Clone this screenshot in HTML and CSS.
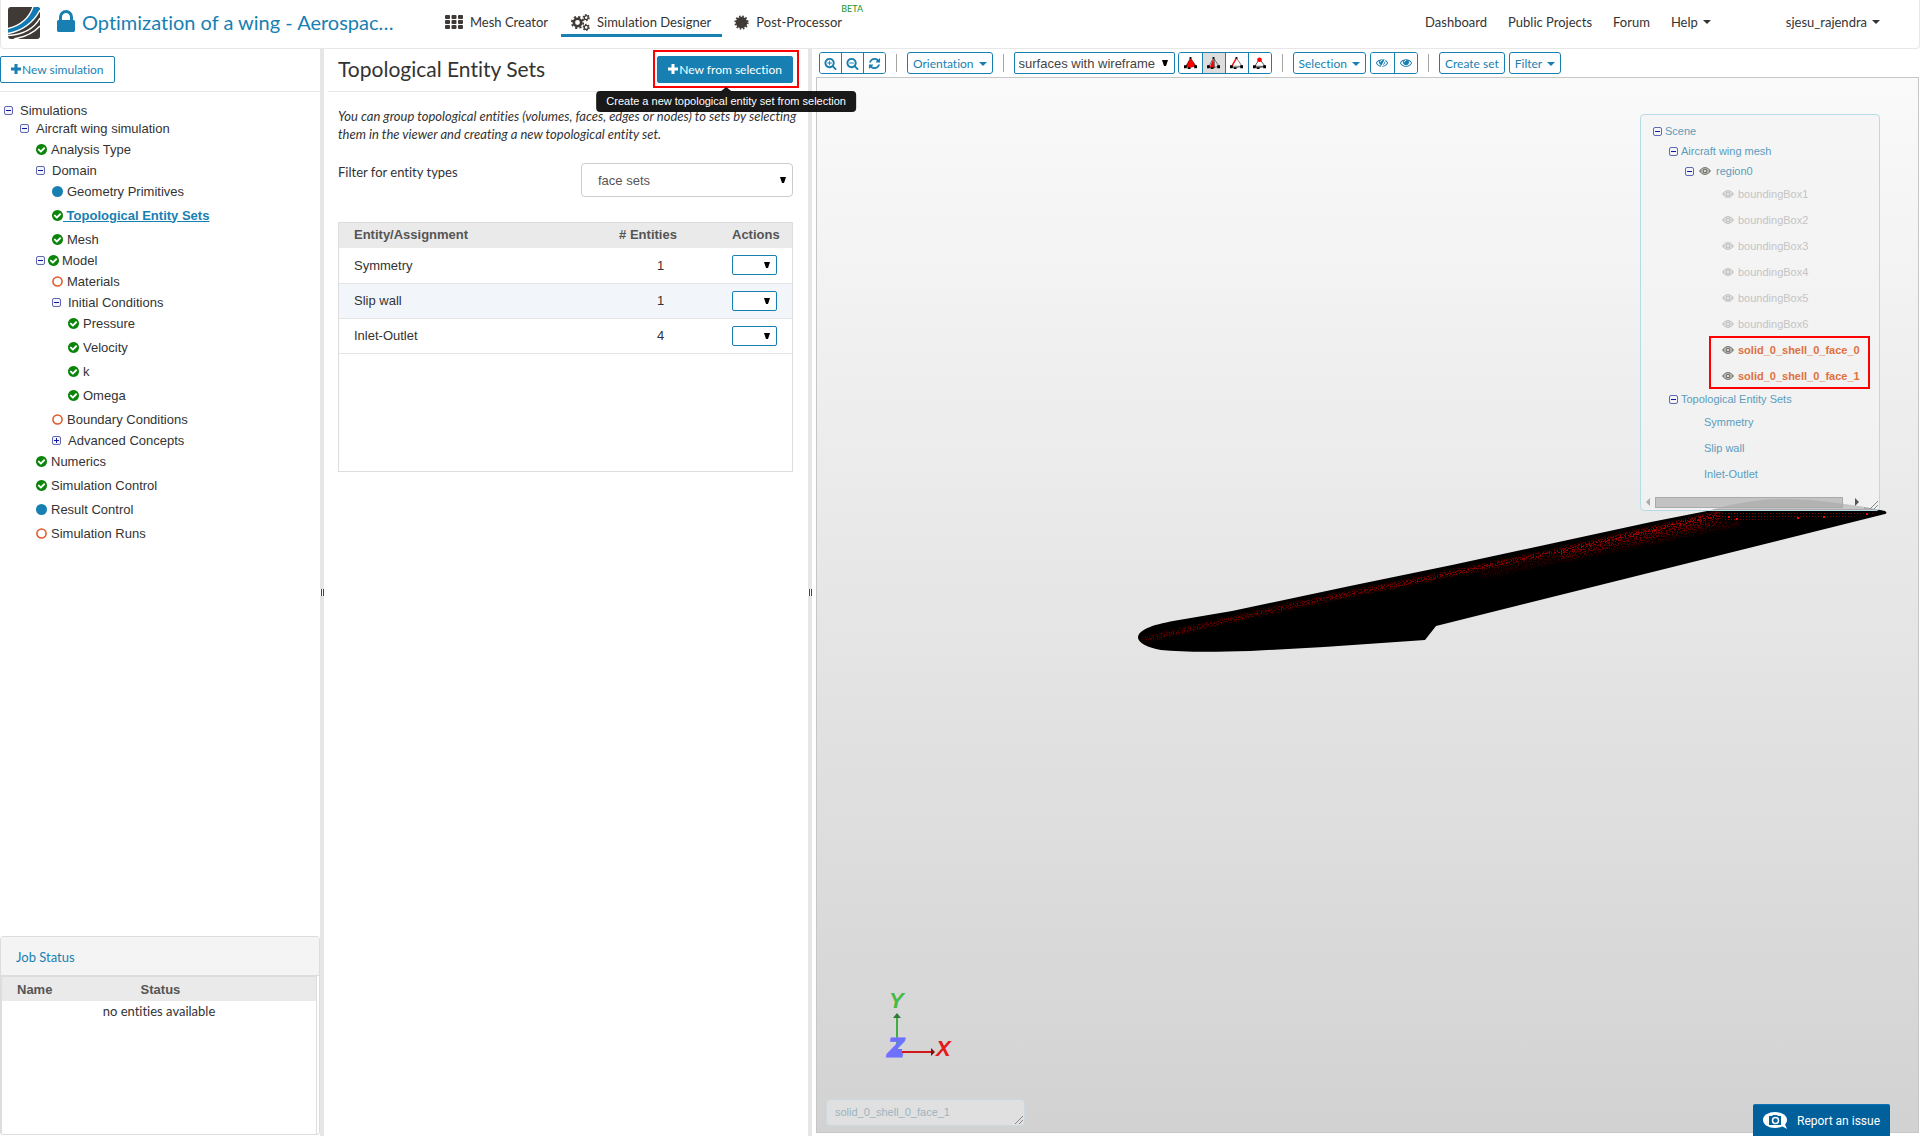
FILE: index.html
```html
<!DOCTYPE html>
<html lang="en">
<head>
    <meta charset="UTF-8">
    <meta name="viewport" content="width=device-width, initial-scale=1.0">
    <title>Optimization of a wing - Simulation Designer</title>
    <link rel="stylesheet" href="styles.css">
</head>
<body>
    <!-- Icon sprite -->
    <svg class="sprite" aria-hidden="true">
        <symbol id="check" viewBox="128 128 1536 1536"><path d="M1412 734q0-28-18-46l-91-90q-19-19-45-19t-45 19l-408 407-226-226q-19-19-45-19t-45 19l-91 90q-18 18-18 46 0 27 18 45l362 362q19 19 45 19 27 0 46-19l543-543q18-18 18-45zm252 162q0 209-103 385.5t-279.5 279.5-385.5 103-385.5-103-279.5-279.5-103-385.5 103-385.5 279.5-279.5 385.5-103 385.5 103 279.5 279.5 103 385.5z"/></symbol>
        <symbol id="dot" viewBox="0 0 12 12"><circle cx="6" cy="6" r="6"/></symbol>
        <symbol id="ring" viewBox="0 0 12 12"><circle cx="6" cy="6" r="5" fill="none" stroke="currentColor" stroke-width="1.7"/></symbol>
        <symbol id="plus" viewBox="0 0 10 10"><path d="M3.5 0h3v3.5H10v3H6.500V10h-3V6.500H0v-3h3.500z"/></symbol>
        <symbol id="lock" viewBox="320 128 1152 1408"><path d="M640 768h512v-192q0-106-75-181t-181-75-181 75-75 181v192zm832 96v576q0 40-28 68t-68 28h-960q-40 0-68-28t-28-68v-576q0-40 28-68t68-28h32v-192q0-184 132-316t316-132 316 132 132 316v192h32q40 0 68 28t28 68z"/></symbol>
        <symbol id="zoom-in" viewBox="0 0 1792 1792"><path d="M1088 800v64q0 13-9.500 22.500t-22.500 9.500h-224v224q0 13-9.500 22.500t-22.500 9.500h-64q-13 0-22.500-9.500t-9.500-22.500v-224h-224q-13 0-22.500-9.500t-9.500-22.500v-64q0-13 9.500-22.500t22.500-9.500h224v-224q0-13 9.500-22.500t22.500-9.500h64q13 0 22.500 9.500t9.500 22.500v224h224q13 0 22.500 9.500t9.500 22.500zm128 32q0-185-131.500-316.500t-316.500-131.500-316.500 131.500-131.500 316.500 131.500 316.500 316.500 131.500 316.500-131.500 131.500-316.500zm512 832q0 53-37.500 90.500t-90.500 37.500q-54 0-90-38l-343-342q-179 124-399 124-143 0-273.500-55.500t-225-150-150-225-55.500-273.500 55.500-273.500 150-225 225-150 273.500-55.500 273.500 55.500 225 150 150 225 55.500 273.500q0 220-124 399l343 343q37 37 37 90z"/></symbol>
        <symbol id="zoom-out" viewBox="0 0 1792 1792"><path d="M1088 800v64q0 13-9.500 22.500t-22.500 9.500h-576q-13 0-22.500-9.500t-9.500-22.500v-64q0-13 9.500-22.500t22.500-9.500h576q13 0 22.500 9.500t9.500 22.500zm128 32q0-185-131.500-316.500t-316.500-131.500-316.500 131.500-131.500 316.500 131.500 316.500 316.500 131.500 316.500-131.500 131.500-316.500zm512 832q0 53-37.500 90.500t-90.500 37.500q-54 0-90-38l-343-342q-179 124-399 124-143 0-273.500-55.500t-225-150-150-225-55.500-273.500 55.500-273.500 150-225 225-150 273.500-55.500 273.500 55.500 225 150 150 225 55.500 273.500q0 220-124 399l343 343q37 37 37 90z"/></symbol>
        <symbol id="refresh" viewBox="0 0 1792 1792"><path d="M1639 1056q0 5-1 7-64 268-268 434.500t-478 166.500q-146 0-282.500-55t-243.500-157l-129 129q-19 19-45 19t-45-19-19-45v-448q0-26 19-45t45-19h448q26 0 45 19t19 45-19 45l-137 137q71 66 161 102t187 36q134 0 250-65t186-179q11-17 53-117 8-23 30-23h192q13 0 22.500 9.500t9.500 22.500zm25-800v448q0 26-19 45t-45 19h-448q-26 0-45-19t-19-45 19-45l138-138q-148-137-349-137-134 0-250 65t-186 179q-11 17-53 117-8 23-30 23h-199q-13 0-22.500-9.500t-9.500-22.500v-7q65-268 270-434.500t480-166.500q146 0 284 55.500t245 156.500l130-129q19-19 45-19t45 19 19 45z"/></symbol>
        <symbol id="eye" viewBox="0 384 1792 1152"><path d="M1664 960q-152-236-381-353 61 104 61 225 0 185-131.500 316.500t-316.500 131.500-316.500-131.500-131.500-316.500q0-121 61-225-229 117-381 353 133 205 333.500 326.500t434.500 121.500 434.500-121.500 333.500-326.500zm-720-384q0-20-14-34t-34-14q-125 0-214.500 89.500t-89.500 214.500q0 20 14 34t34 14 34-14 14-34q0-86 61-147t147-61q20 0 34-14t14-34zm848 384q0 34-20 69-140 230-376.500 368.500t-499.500 138.500-499.500-139-376.500-368q-20-35-20-69t20-69q140-229 376.500-368t499.500-139 499.500 139 376.500 368q20 35 20 69z"/></symbol>
        <symbol id="eye-off" viewBox="0 384 1792 1152"><use href="#eye" x="0" y="384" width="1792" height="1152"/><path d="M1380 380L760 1560" stroke="#fff" stroke-width="200"/><path d="M1220 400L620 1520" stroke="currentColor" stroke-width="130"/></symbol>
        <symbol id="eye-solid" viewBox="0 0 12 8"><path fill-rule="evenodd" d="M0 4Q3 0 6 0t6 4Q9 8 6 8T0 4zm6-2.800a2.800 2.800 0 1 0 0 5.600a2.800 2.800 0 1 0 0-5.600z"/><circle cx="6" cy="4" r="2.500"/><circle cx="6" cy="4" r="1" fill="#f3f3f3"/><path d="M3.200 1.700a3.500 3.500 0 0 0 0 4.600M8.800 1.700a3.500 3.500 0 0 1 0 4.600" fill="none" stroke="#f3f3f3" stroke-width=".5"/></symbol>
        <symbol id="grid" viewBox="0 0 18 14"><path d="M1 0h3q1 0 1 1v2q0 1-1 1H1Q0 4 0 3V1q0-1 1-1zM7.500 0h3q1 0 1 1v2q0 1-1 1h-3q-1 0-1-1V1q0-1 1-1zM14 0h3q1 0 1 1v2q0 1-1 1h-3q-1 0-1-1V1q0-1 1-1zM1 5h3q1 0 1 1v2q0 1-1 1H1Q0 9 0 8V6q0-1 1-1zM7.500 5h3q1 0 1 1v2q0 1-1 1h-3q-1 0-1-1V6q0-1 1-1zM14 5h3q1 0 1 1v2q0 1-1 1h-3q-1 0-1-1V6q0-1 1-1zM1 10h3q1 0 1 1v2q0 1-1 1H1q-1 0-1-1v-2q0-1 1-1zM7.500 10h3q1 0 1 1v2q0 1-1 1h-3q-1 0-1-1v-2q0-1 1-1zM14 10h3q1 0 1 1v2q0 1-1 1h-3q-1 0-1-1v-2q0-1 1-1z"/></symbol>
        <symbol id="cogs" viewBox="0 0 19 17">
            <g fill="none" stroke="currentColor">
                <circle cx="6.500" cy="8.500" r="3.700" stroke-width="2.600"/><circle cx="6.500" cy="8.500" r="5.700" stroke-width="1.800" stroke-dasharray="2.240 2.240"/>
                <circle cx="15.200" cy="3.600" r="2" stroke-width="1.400"/><circle cx="15.200" cy="3.600" r="3" stroke-width="1.200" stroke-dasharray="1.570 1.570"/>
                <circle cx="15.200" cy="13.400" r="2" stroke-width="1.400"/><circle cx="15.200" cy="13.400" r="3" stroke-width="1.200" stroke-dasharray="1.570 1.570"/>
            </g>
        </symbol>
        <symbol id="burst" viewBox="0 0 16 16"><circle cx="8" cy="8" r="6.200"/><circle cx="8" cy="8" r="6.700" fill="none" stroke="currentColor" stroke-width="1.800" stroke-dasharray="1.750 1.758"/></symbol>
        <symbol id="caret" viewBox="0 0 8 4"><path d="M0 0h8L4 4z"/></symbol>
        <symbol id="tet-solid" viewBox="0 0 14 14"><path d="M7 1L2 10l3 2 8-2z" fill="#f00"/><path d="M7 1L2 10M7 1l6 9" fill="none" stroke="#311" stroke-width=".7"/><path d="M6 0h2v2H6zM0 9h3v3H0zM4 11h3v2H4zM11 9h3v3h-3z"/></symbol>
        <symbol id="tet-face" viewBox="0 0 14 14"><path d="M7 1l5 9-7 2z" fill="#ddd"/><path d="M7 1L3 11l5 1z" fill="#f00"/><path d="M7 1L2 10l3 2 8-2zM8 2v9" fill="none" stroke="#222" stroke-width=".6"/><path d="M6 0h2v2H6zM0 9h3v3H0zM4 11h3v2H4zM11 9h3v3h-3z"/></symbol>
        <symbol id="tet-edge" viewBox="0 0 14 14"><path d="M7 1l6 9-8 2-3-2 11 0" fill="none" stroke="#555" stroke-width=".8"/><path d="M7 1L2 10" stroke="#f00" stroke-width="1.500"/><path d="M6 0h2v2H6zM0 9h3v3H0zM4 11h3v2H4zM11 9h3v3h-3z"/></symbol>
        <symbol id="tet-node" viewBox="0 0 14 14"><path d="M7 2L2 10l3 2 8-2zM2 10l11 0" fill="none" stroke="#222" stroke-width=".8"/><path d="M0 9h3v3H0zM4 11h3v2H4zM11 9h3v3h-3z"/><circle cx="7" cy="3" r="2.500" fill="#f00"/></symbol>
    </svg>

    <header class="topbar">
        <a class="logo" href="#" aria-label="Home">
            <svg viewBox="0 0 32 32" width="32" height="32">
                <clipPath id="logoClip"><rect width="32" height="32" rx="3"/></clipPath>
                <g clip-path="url(#logoClip)">
                    <rect width="32" height="32" fill="#403a36"/>
                    <path d="M0 22Q20 17 25 0h7v2Q24 22 0 27z" fill="#0f7ab3"/>
                    <g fill="none" stroke="#fff" stroke-width="1.400">
                        <path d="M0 21.500Q19 17 25 0"/>
                        <path d="M0 26.500Q22 22 32 3"/>
                        <path d="M0 28.500Q23 27 32 11"/>
                        <path d="M6 32Q23 29 32 19"/>
                    </g>
                </g>
            </svg>
        </a>
        <svg class="lock" width="18" height="22"><use href="#lock"/></svg>
        <h1 class="project">Optimization of a wing - Aerospac…</h1>
        <nav class="modes">
            <a href="#"><svg width="18" height="14"><use href="#grid"/></svg>Mesh Creator</a>
            <a class="active" href="#"><svg width="19" height="17"><use href="#cogs"/></svg>Simulation Designer</a>
            <a href="#"><svg width="15" height="15"><use href="#burst"/></svg>Post-Processor<span class="beta">BETA</span></a>
        </nav>
        <nav class="links">
            <a href="#">Dashboard</a>
            <a href="#">Public Projects</a>
            <a href="#">Forum</a>
            <a href="#">Help <svg width="8" height="4"><use href="#caret"/></svg></a>
            <a class="user" href="#">sjesu_rajendra <svg width="8" height="4"><use href="#caret"/></svg></a>
        </nav>
    </header>

    <main class="workspace">
        <!-- Simulation tree -->
        <aside class="sidebar">
            <div class="panel-head">
                <button class="btn" type="button"><svg width="10" height="10"><use href="#plus"/></svg>New simulation</button>
            </div>
            <ul class="tree">
                <li><div class="folder"><button class="toggle" aria-label="Collapse"></button>Simulations</div>
                    <ul>
                        <li><div class="folder"><button class="toggle" aria-label="Collapse"></button>Aircraft wing simulation</div>
                            <ul>
                                <li class="leaf"><svg class="done"><use href="#check"/></svg>Analysis Type</li>
                                <li><div class="folder"><button class="toggle" aria-label="Collapse"></button>Domain</div>
                                    <ul>
                                        <li class="leaf"><svg class="info"><use href="#dot"/></svg>Geometry Primitives</li>
                                        <li class="leaf selected"><svg class="done"><use href="#check"/></svg><a href="#">&nbsp;Topological Entity Sets</a></li>
                                        <li class="leaf"><svg class="done"><use href="#check"/></svg>Mesh</li>
                                    </ul>
                                </li>
                                <li><div class="folder with-status"><button class="toggle" aria-label="Collapse"></button><svg class="done"><use href="#check"/></svg>Model</div>
                                    <ul>
                                        <li class="leaf"><svg class="todo"><use href="#ring"/></svg>Materials</li>
                                        <li><div class="folder"><button class="toggle" aria-label="Collapse"></button>Initial Conditions</div>
                                            <ul>
                                                <li class="leaf"><svg class="done"><use href="#check"/></svg>Pressure</li>
                                                <li class="leaf"><svg class="done"><use href="#check"/></svg>Velocity</li>
                                                <li class="leaf"><svg class="done"><use href="#check"/></svg>k</li>
                                                <li class="leaf"><svg class="done"><use href="#check"/></svg>Omega</li>
                                            </ul>
                                        </li>
                                        <li class="leaf"><svg class="todo"><use href="#ring"/></svg>Boundary Conditions</li>
                                        <li><div class="folder"><button class="toggle closed" aria-label="Expand"></button>Advanced Concepts</div></li>
                                    </ul>
                                </li>
                                <li class="leaf"><svg class="done"><use href="#check"/></svg>Numerics</li>
                                <li class="leaf"><svg class="done"><use href="#check"/></svg>Simulation Control</li>
                                <li class="leaf"><svg class="info"><use href="#dot"/></svg>Result Control</li>
                                <li class="leaf"><svg class="todo"><use href="#ring"/></svg>Simulation Runs</li>
                            </ul>
                        </li>
                    </ul>
                </li>
            </ul>
            <section class="jobs">
                <h2>Job Status</h2>
                <div class="jobs-body">
                    <table>
                        <thead><tr><th>Name</th><th>Status</th></tr></thead>
                        <tbody><tr><td colspan="2">no entities available</td></tr></tbody>
                    </table>
                </div>
            </section>
        </aside>

        <div class="splitter"></div>

        <!-- Entity sets -->
        <section class="details">
            <div class="panel-head">
                <h2>Topological Entity Sets</h2>
                <div class="highlight">
                    <button class="btn primary" type="button" aria-describedby="newTip"><svg width="10" height="10"><use href="#plus"/></svg>New from selection</button>
                    <div class="tooltip" id="newTip" role="tooltip">Create a new topological entity set from selection</div>
                </div>
            </div>
            <div class="details-body">
                <p class="hint">You can group topological entities (volumes, faces, edges or nodes) to sets by selecting them in the viewer and creating a new topological entity set.</p>
                <div class="filter">
                    <label for="entityType">Filter for entity types</label>
                    <select id="entityType"><option>face sets</option></select>
                </div>
                <div class="entity-box">
                    <table class="entities">
                        <thead>
                            <tr><th>Entity/Assignment</th><th class="num"># Entities</th><th class="act">Actions</th></tr>
                        </thead>
                        <tbody>
                            <tr><td>Symmetry</td><td class="num">1</td><td class="act"><select aria-label="Actions for Symmetry"><option></option></select></td></tr>
                            <tr><td>Slip wall</td><td class="num">1</td><td class="act"><select aria-label="Actions for Slip wall"><option></option></select></td></tr>
                            <tr><td>Inlet-Outlet</td><td class="num">4</td><td class="act"><select aria-label="Actions for Inlet-Outlet"><option></option></select></td></tr>
                        </tbody>
                    </table>
                </div>
            </div>
        </section>

        <div class="splitter"></div>

        <!-- 3D viewer -->
        <section class="viewer">
            <div class="toolbar">
                <div class="group">
                    <button type="button" aria-label="Zoom in"><svg width="13" height="13"><use href="#zoom-in"/></svg></button>
                    <button type="button" aria-label="Zoom out"><svg width="13" height="13"><use href="#zoom-out"/></svg></button>
                    <button type="button" aria-label="Reset view"><svg width="13" height="13"><use href="#refresh"/></svg></button>
                </div>
                <span class="sep"></span>
                <button class="tool" type="button">Orientation<svg width="8" height="4"><use href="#caret"/></svg></button>
                <span class="sep"></span>
                <div class="render">
                    <select aria-label="Render mode"><option>surfaces with wireframe</option></select>
                    <div class="group">
                        <button type="button" aria-label="Pick volumes"><svg width="13" height="13"><use href="#tet-solid"/></svg></button>
                        <button class="pressed" type="button" aria-label="Pick faces"><svg width="13" height="13"><use href="#tet-face"/></svg></button>
                        <button type="button" aria-label="Pick edges"><svg width="13" height="13"><use href="#tet-edge"/></svg></button>
                        <button type="button" aria-label="Pick nodes"><svg width="13" height="13"><use href="#tet-node"/></svg></button>
                    </div>
                </div>
                <span class="sep"></span>
                <div class="pick">
                    <button class="tool" type="button">Selection<svg width="8" height="4"><use href="#caret"/></svg></button>
                    <div class="group">
                        <button type="button" aria-label="Hide selection"><svg width="12" height="8"><use href="#eye-off"/></svg></button>
                        <button type="button" aria-label="Show selection"><svg width="12" height="8"><use href="#eye"/></svg></button>
                    </div>
                </div>
                <span class="sep"></span>
                <div class="pick">
                    <button class="tool" type="button">Create set</button>
                    <button class="tool" type="button">Filter<svg width="8" height="4"><use href="#caret"/></svg></button>
                </div>
            </div>

            <div class="canvas">
                <svg class="model" viewBox="817 78 1101 1054" preserveAspectRatio="xMidYMid meet">
                    <defs>
                        <path id="wing" d="M1138 638C1138 629 1155 624 1179 620L1232 611L1350 586L1452 565L1554 543L1651 522L1707 511C1735 503 1760 499 1783 499C1810 499 1845 503 1875 509L1885 511Q1888 513 1885 514L1436 626L1425 640L1324 647L1250 651Q1190 653 1161 650Q1140 646 1138 638z"/>
                        <clipPath id="wingClip"><use href="#wing"/></clipPath>
                        <linearGradient id="streak" gradientUnits="userSpaceOnUse" x1="1140" y1="640" x2="1720" y2="515">
                            <stop offset="0" stop-color="#d00000" stop-opacity=".5"/>
                            <stop offset=".5" stop-color="#d00000" stop-opacity=".75"/>
                            <stop offset="1" stop-color="#d00000" stop-opacity=".95"/>
                        </linearGradient>
                        <filter id="speckle" filterUnits="userSpaceOnUse" x="1130" y="490" width="770" height="170">
                            <feGaussianBlur in="SourceGraphic" stdDeviation="1.800" result="soft"/>
                            <feTurbulence type="fractalNoise" baseFrequency="0.750" numOctaves="2" seed="4"/>
                            <feColorMatrix values="0 0 0 0 1  0 0 0 0 1  0 0 0 0 1  6 0 0 0 -2.700" result="grain"/>
                            <feComposite in="soft" in2="grain" operator="in"/>
                        </filter>
                        <pattern id="mesh" width="3" height="3" patternUnits="userSpaceOnUse"><rect width="1" height="1" fill="#c00000"/></pattern>
                    </defs>
                    <use href="#wing"/>
                    <g clip-path="url(#wingClip)">
                        <g filter="url(#speckle)" fill="none" stroke="url(#streak)">
                            <path d="M1142 640L1300 604L1420 580L1560 551L1720 514" stroke-width="5"/>
                            <path d="M1560 556L1720 520" stroke-width="7" opacity=".5"/>
                            <path d="M1480 575L1740 522" stroke-width="8" opacity=".25"/>
                        </g>
                        <path d="M1715 513L1732 504L1783 499L1885 512L1850 517L1725 521z" fill="url(#mesh)" opacity=".7"/>
                        <path d="M1728 516h2v2h-2zM1736 518h2v2h-2zM1797 517h2v2h-2zM1823 516h2v2h-2zM1866 513h2v2h-2z" fill="#f00"/>
                    </g>
                    <!-- Axes -->
                    <path d="M897 1050V1017" stroke="#3fae3f" stroke-width="2"/>
                    <path d="M893 1018l4-5 4 5z" fill="#2f7a3a"/>
                    <path d="M900 1052H932" stroke="#d01818" stroke-width="2"/>
                    <path d="M931 1048l4 4-4 4z" fill="#801010"/>
                    <g class="axis">
                        <text x="889" y="1008" fill="#45bb45">Y</text>
                        <text x="936" y="1056" fill="#e61919">X</text>
                        <text class="depth" x="887" y="1057" fill="#7070ff" stroke="#7070ff">Z</text>
                        <path d="M889 1057l8-8h5v8z" fill="#7070ff"/>
                    </g>
                </svg>

                <div class="scene">
                    <ul>
                        <li><div class="row"><button class="toggle" aria-label="Collapse"></button>Scene</div>
                            <ul>
                                <li><div class="row"><button class="toggle" aria-label="Collapse"></button>Aircraft wing mesh</div>
                                    <ul>
                                        <li><div class="row region"><button class="toggle" aria-label="Collapse"></button><svg width="12" height="8"><use href="#eye-solid"/></svg>region0</div>
                                            <ul class="faces">
                                                <li class="off"><svg width="12" height="8"><use href="#eye-solid"/></svg>boundingBox1</li>
                                                <li class="off"><svg width="12" height="8"><use href="#eye-solid"/></svg>boundingBox2</li>
                                                <li class="off"><svg width="12" height="8"><use href="#eye-solid"/></svg>boundingBox3</li>
                                                <li class="off"><svg width="12" height="8"><use href="#eye-solid"/></svg>boundingBox4</li>
                                                <li class="off"><svg width="12" height="8"><use href="#eye-solid"/></svg>boundingBox5</li>
                                                <li class="off"><svg width="12" height="8"><use href="#eye-solid"/></svg>boundingBox6</li>
                                                <li class="picked"><svg width="12" height="8"><use href="#eye-solid"/></svg>solid_0_shell_0_face_0</li>
                                                <li class="picked"><svg width="12" height="8"><use href="#eye-solid"/></svg>solid_0_shell_0_face_1</li>
                                            </ul>
                                        </li>
                                    </ul>
                                </li>
                                <li><div class="row"><button class="toggle" aria-label="Collapse"></button>Topological Entity Sets</div>
                                    <ul class="sets">
                                        <li>Symmetry</li>
                                        <li>Slip wall</li>
                                        <li>Inlet-Outlet</li>
                                    </ul>
                                </li>
                            </ul>
                        </li>
                    </ul>
                    <div class="mark"></div>
                    <div class="hscroll"><span class="arrow prev"></span><span class="thumb"></span><span class="arrow next"></span></div>
                    <svg class="grip" width="8" height="8"><path d="M0 8L8 0M4 8L8 4"/></svg>
                </div>

                <div class="picked-name">solid_0_shell_0_face_1<svg class="grip" width="8" height="8"><path d="M0 8L8 0M4 8L8 4"/></svg></div>
            </div>
        </section>
    </main>

    <button class="report" type="button">
        <svg width="24" height="17" viewBox="0 0 24 17"><ellipse cx="12" cy="8" rx="12" ry="8" fill="#fff"/><path d="M17 13l7 4-3-7z" fill="#fff"/><path d="M6 4h3l1-1h4l1 1h3v9H6z" fill="#00609c"/><circle cx="12.500" cy="8.500" r="3" fill="none" stroke="#fff" stroke-width="1.500"/></svg>
        Report an issue
    </button>
</body>
</html>
```
FILE: styles.css
```css
* {
    box-sizing: border-box;
}
body {
    margin: 0;
    height: 100vh;
    display: flex;
    flex-direction: column;
    font-family: Lato, sans-serif;
    font-size: 13px;
    font-variant-ligatures: none;
    color: #333;
    background: #fff;
    overflow: hidden;
}
ul {
    list-style: none;
    margin: 0;
    padding: 0;
}
h1, h2, p {
    margin: 0;
    font-weight: normal;
}
a {
    color: inherit;
    text-decoration: none;
}
button, select {
    font: inherit;
    cursor: pointer;
}
svg {
    fill: currentColor;
    flex: none;
}
.sprite {
    position: absolute;
    width: 0;
    height: 0;
}

/* Top bar */
.topbar {
    display: flex;
    align-items: center;
    flex: none;
    height: 49px;
    padding: 0 39px 4px 7px;
    border: 1px solid #e7e7e7;
    border-top: 0;
    border-radius: 0 0 4px 4px;
}
.logo {
    display: flex;
    margin-top: 2px;
}
.lock {
    margin: 0 7px 2px 17px;
    color: #187fb2;
}
.project {
    width: 363px;
    font-size: 20px;
    color: #187fb2;
    white-space: nowrap;
}
.modes {
    display: flex;
    align-items: center;
}
.modes a {
    display: flex;
    align-items: center;
    gap: 7px;
    height: 27px;
    margin-top: 3px;
    padding-right: 13px;
    border-bottom: 3px solid transparent;
    position: relative;
}
.modes svg {
    color: #403a36;
}
.modes .active {
    padding: 0 11px 0 10px;
    margin-right: 12px;
    border-color: #187fb2;
}
.beta {
    position: absolute;
    right: -8px;
    top: -7px;
    font-size: 9px;
    line-height: 12px;
    color: #1a962a;
}
.links {
    display: flex;
    margin-left: auto;
    gap: 21px;
}
.links a {
    display: flex;
    align-items: center;
    gap: 5px;
}
.links .user {
    margin-left: 54px;
}

/* Layout */
.workspace {
    display: flex;
    flex: 1;
    min-height: 0;
}
.sidebar {
    display: flex;
    flex-direction: column;
    flex: 0 0 320px;
}
.details {
    flex: 0 0 484px;
    padding-left: 4px;
}
.viewer {
    display: flex;
    flex-direction: column;
    flex: 1;
    min-width: 0;
    padding: 0 1px 3px 4px;
}
.splitter {
    display: flex;
    align-items: center;
    flex: 0 0 4px;
    background: #e6e6e6;
}
.splitter::before {
    content: '';
    width: 4px;
    height: 7px;
    background: linear-gradient(to right, #fff 1px, #444 1px, #444 2px, #fff 2px, #fff 3px, #444 3px);
}
.panel-head {
    display: flex;
    align-items: center;
    justify-content: space-between;
    flex: none;
    height: 43px;
    padding-bottom: 1px;
    border-bottom: 1px solid #e7e7e7;
}
.panel-head h2 {
    margin-bottom: 1px;
    font-size: 21px;
}
.btn {
    display: flex;
    align-items: center;
    gap: 1px;
    height: 27px;
    padding: 0 10px;
    font-size: 12px;
    color: #187fb2;
    background: #fff;
    border: 1px solid #187fb2;
    border-radius: 2px;
    margin-bottom: 1px;
}
.btn.primary {
    margin: 0;
    color: #fff;
    background: #187fb2;
}

/* Trees */
.tree {
    flex: 1;
    padding: 9px 4px;
    font: 13px "Liberation Sans", Arial, sans-serif;
}
.tree ul {
    padding-left: 16px;
}
.folder, .leaf {
    display: flex;
    align-items: center;
}
.folder {
    height: 18px;
    gap: 7px;
}
.folder.with-status {
    gap: 3px;
}
.leaf {
    height: 24px;
    gap: 4px;
}
.tree svg {
    width: 11px;
    height: 11px;
}
.done {
    color: #0a850a;
}
.info {
    color: #187fb2;
}
.todo {
    color: #e2592a;
}
.leaf.selected {
    gap: 0;
    font-weight: bold;
    color: #187fb2;
}
.leaf.selected a {
    text-decoration: underline;
}
.toggle {
    flex: none;
    width: 9px;
    height: 9px;
    padding: 0;
    border: 1px solid #5f69b0;
    border-radius: 2px;
    background: linear-gradient(#1515a0, #1515a0) center / 5px 1px no-repeat, #f2f4fa;
}
.toggle.closed {
    background: linear-gradient(#1515a0, #1515a0) center / 5px 1px no-repeat, linear-gradient(#1515a0, #1515a0) center / 1px 5px no-repeat, #f2f4fa;
}

/* Job status */
.jobs {
    flex: none;
    display: flex;
    flex-direction: column;
    height: 199px;
    border: 1px solid #ddd;
    border-radius: 3px;
    margin-bottom: 1px;
}
.jobs h2 {
    height: 39px;
    padding-left: 15px;
    font-size: 13px;
    line-height: 40px;
    color: #187fb2;
    background: #f4f4f4;
    border-bottom: 1px solid #ddd;
}
.jobs-body {
    flex: 1;
    margin-right: 2px;
    border: 1px solid #ddd;
    border-width: 1px 1px 0;
}
.jobs table {
    width: 100%;
    border-collapse: collapse;
}
.jobs th {
    height: 24px;
    padding: 0 0 0 15px;
    font: bold 13px "Liberation Sans", Arial, sans-serif;
    text-align: left;
    color: #555;
    background: #eaeaea;
}
.jobs th:last-child {
    width: 60%;
    padding-left: 13px;
}
.jobs td {
    padding: 0;
    line-height: 20px;
    text-align: center;
}

/* Entity sets */
.details .panel-head {
    padding: 0 9px 3px 10px;
}
.highlight {
    position: relative;
    padding: 4px 4px 3px 2px;
    border: 2px solid #f00;
}
.tooltip {
    position: absolute;
    z-index: 5;
    top: 39px;
    left: 50%;
    transform: translateX(-50%);
    padding: 0 10px;
    font: 11px/21px "Liberation Sans", Arial, sans-serif;
    white-space: nowrap;
    color: #fff;
    background: rgba(0, 0, 0, 0.9);
    border-radius: 4px;
}
.tooltip::before {
    content: '';
    position: absolute;
    top: -4px;
    left: 50%;
    margin-left: -5px;
    border: 5px solid transparent;
    border-top: 0;
    border-bottom: 4px solid rgba(0, 0, 0, 0.9);
}
.details-body {
    padding: 15px 15px 0 10px;
}
.hint {
    margin-right: -14px;
    line-height: 18px;
    font-style: italic;
}
.filter {
    display: flex;
    justify-content: space-between;
    margin: 20px 0 25px;
}
.filter label {
    line-height: 18px;
}
.filter select {
    width: 212px;
    height: 34px;
    padding: 0 16px;
    font: 13px "Liberation Sans", Arial, sans-serif;
    color: #555;
    border: 1px solid #ccc;
    border-radius: 4px;
}
select {
    appearance: none;
    background: #fff url("data:image/svg+xml,%3Csvg xmlns='http://www.w3.org/2000/svg' width='6' height='6'%3E%3Cpath d='M0 0h6L4 6H2z'/%3E%3C/svg%3E") right 6px center no-repeat;
}
.entity-box {
    height: 250px;
    border: 1px solid #ddd;
}
.entities {
    width: 100%;
    border-collapse: collapse;
    font: 13px "Liberation Sans", Arial, sans-serif;
}
.entities th {
    height: 25px;
    padding: 0 0 2px 15px;
    text-align: left;
    color: #555;
    background: #eaeaea;
}
.entities td {
    height: 35px;
    padding: 0 0 0 15px;
    border-bottom: 1px solid #e4e4e4;
}
.entities tbody tr:nth-child(even) {
    background: #f2f6fb;
}
.entities .num {
    width: 114px;
    padding: 0 29px 0 0;
    text-align: center;
}
.entities th.num {
    padding: 0 54px 2px 0;
    white-space: nowrap;
}
.entities .act {
    width: 60px;
    padding-left: 0;
}
.entities select {
    display: block;
    width: 45px;
    height: 20px;
    border: 1px solid #187fb2;
    border-radius: 2px;
}

/* Viewer */
.toolbar {
    display: flex;
    align-items: center;
    flex: none;
    height: 28px;
    gap: 10px;
    padding: 0 0 0 3px;
    color: #187fb2;
}
.group {
    display: flex;
    border: 1px solid #187fb2;
    border-radius: 3px;
    overflow: hidden;
}
.group button {
    display: flex;
    align-items: center;
    justify-content: center;
    width: 22px;
    height: 20px;
    padding: 0;
    color: #187fb2;
    background: #fff;
    border: 0;
    border-left: 1px solid #187fb2;
}
.group button:first-child {
    width: 21px;
    border-left: 0;
}
.render .group button {
    width: 23px;
    color: #000;
}
.group .pressed {
    background: #ddd;
}
.pick .group button {
    width: 23px;
    color: #187fb2;
}
.sep {
    width: 1px;
    height: 18px;
    background: #a9a5a0;
}
.tool {
    display: flex;
    align-items: center;
    gap: 5px;
    height: 22px;
    padding: 0 5px;
    font-size: 12px;
    color: #187fb2;
    background: #fff;
    border: 1px solid #187fb2;
    border-radius: 3px;
}
.tool svg {
    margin-top: 2px;
}
.render, .pick {
    display: flex;
    align-items: center;
    gap: 3px;
}
.pick {
    gap: 4px;
}
.render select {
    width: 161px;
    height: 22px;
    padding: 0 4px;
    font: 13px "Liberation Sans", Arial, sans-serif;
    color: #444;
    border: 1px solid #187fb2;
    border-radius: 2px;
}
.canvas {
    flex: 1;
    position: relative;
    min-height: 0;
    border: 1px solid #c6c6c6;
    background: linear-gradient(#fafafa, #d2d2d2);
}
.model {
    display: block;
    width: 100%;
    height: 100%;
    fill: #000;
}
.axis {
    font: italic bold 22px "Liberation Sans", Arial, sans-serif;
}
.axis .depth {
    font-size: 28px;
    stroke-width: 1px;
}

/* Scene tree */
.scene {
    position: absolute;
    top: 36px;
    right: 38px;
    width: 240px;
    height: 397px;
    padding: 6px 12px;
    font: 11px "Liberation Sans", Arial, sans-serif;
    color: #5b9cbd;
    background: rgba(244, 244, 244, 0.7);
    border: 1px solid #b5dce5;
    border-radius: 4px;
}
.scene ul ul {
    padding-left: 16px;
}
.scene .row {
    display: flex;
    align-items: center;
    gap: 3px;
    height: 20px;
}
.scene .region {
    gap: 5px;
}
.scene svg {
    color: #7c7c74;
}
.scene .faces {
    padding-left: 37px;
}
.scene .faces li, .scene .sets li {
    display: flex;
    align-items: center;
    gap: 4px;
    height: 26px;
}
.scene .sets {
    padding-left: 35px;
}
.scene .off, .scene .off svg {
    color: #c4c4c4;
}
.scene .picked {
    font-weight: bold;
    color: #e0703f;
}
.mark {
    position: absolute;
    top: 221px;
    right: 9px;
    width: 161px;
    height: 53px;
    border: 2px solid #f00;
}
.hscroll {
    position: absolute;
    left: 1px;
    right: 15px;
    bottom: 1px;
    display: flex;
    align-items: center;
    gap: 5px;
    height: 14px;
    padding: 0 5px 0 4px;
    background: rgba(240, 240, 240, 0.4);
}
.thumb {
    flex: 1;
    height: 11px;
    margin-right: 7px;
    background: rgba(165, 165, 165, 0.6);
    border: 1px solid #aaa;
}
.arrow {
    border: 4px solid transparent;
}
.prev {
    border-left: 0;
    border-right-color: #aaa;
}
.next {
    border-right: 0;
    border-left-color: #555;
}
.grip {
    position: absolute;
    right: 1px;
    bottom: 1px;
    stroke: #888;
}
.picked-name {
    position: absolute;
    left: 9px;
    bottom: 6px;
    width: 199px;
    height: 27px;
    padding: 0 8px;
    font: 11px/25px "Liberation Sans", Arial, sans-serif;
    color: #9bb4c0;
    background: #e0e0e0;
    border: 1px solid #cbd8de;
    border-radius: 4px;
}
.report {
    position: absolute;
    right: 30px;
    bottom: 0;
    display: flex;
    align-items: center;
    gap: 10px;
    height: 32px;
    padding: 0 10px;
    font: 12px Roboto, sans-serif;
    color: #fff;
    background: #00609c;
    border: 0;
    border-top: 1px solid #0a72b5;
    border-radius: 2px 2px 0 0;
}
```
